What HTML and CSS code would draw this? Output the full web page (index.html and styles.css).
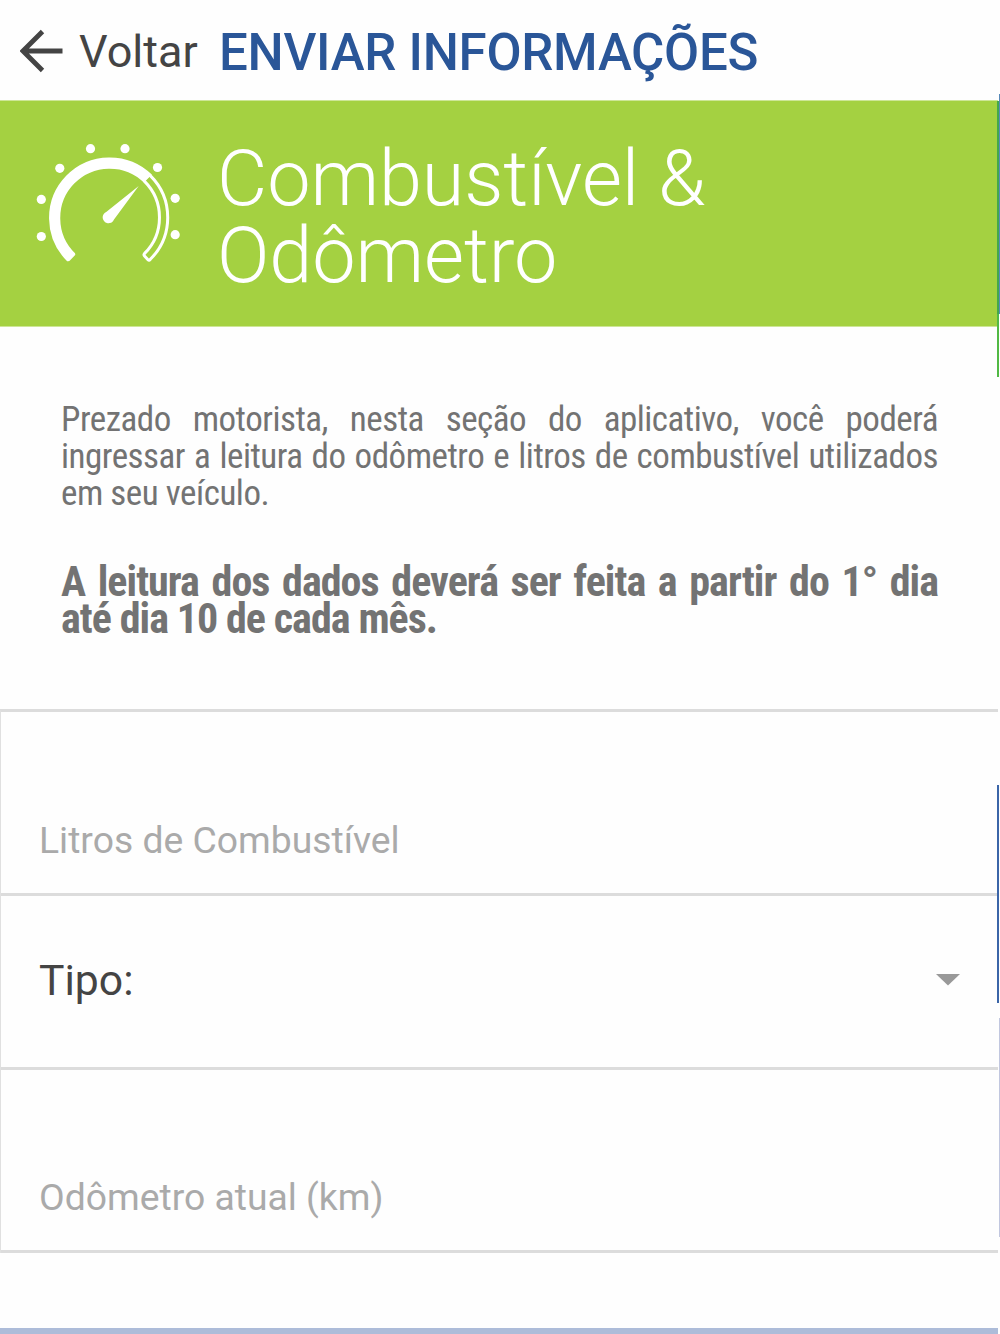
FILE: index.html
```html
<!DOCTYPE html>
<html lang="pt-BR">
<head>
<meta charset="utf-8">
<title>Enviar Informações</title>
<link rel="stylesheet" href="styles.css">
</head>
<body>
<main class="screen">
  <header class="topbar">
    <svg class="back-icon" width="44" height="44" viewBox="0 0 44 44"><path d="M42.500 22H4M22.500 2.500L3 22L22.500 41.500" fill="none" stroke="#444" stroke-width="4.800"/></svg>
    <span class="back">Voltar</span>
    <h1 class="heading">ENVIAR INFORMAÇÕES</h1>
  </header>
  <section class="banner">
    <svg class="gauge" width="150" height="126" viewBox="34 140 150 126">
      <path d="M71.300 257.400A54.800 54.800 0 1 1 147.900 178.600" fill="none" stroke="#fff" stroke-width="11.200"/>
      <path d="M68.600 259.300L73.400 254.300" stroke="#fff" stroke-width="3.600" stroke-linecap="round"/>
      <path d="M150.300 175.600A59 59 0 0 1 150.300 259.300Q149.200 260.900 148 259.700L144.500 256Q143.400 254.800 144.600 253.400A51 51 0 0 0 144.600 181.400Q143.600 180 144.800 178.800L148.200 175.600Q149.300 174.600 150.300 175.600Z" fill="none" stroke="#fff" stroke-width="3"/>
      <path d="M138.700 186L114 219.600A5.900 5.900 0 1 1 106.200 211.900Z" fill="#fff"/>
      <g fill="#fff"><circle cx="41.300" cy="236.500" r="4.600"/><circle cx="41.300" cy="199.400" r="4.600"/><circle cx="59.800" cy="168.300" r="4.600"/><circle cx="90.500" cy="148.700" r="4.600"/><circle cx="125" cy="148.700" r="4.600"/><circle cx="157.500" cy="167.500" r="4.600"/><circle cx="175.200" cy="198.300" r="4.600"/><circle cx="175.200" cy="234.700" r="4.600"/></g>
    </svg>
    <h2 class="title">Combustível &amp;<br>Odômetro</h2>
  </section>
  <section class="intro">
    <p class="lead">Prezado motorista, nesta seção do aplicativo, você poderá ingressar a leitura do odômetro e litros de combustível utilizados em seu veículo.</p>
    <p class="notice">A leitura dos dados deverá ser feita a partir do 1° dia até dia 10 de cada mês.</p>
  </section>
  <form class="form">
    <label class="row liters"><span class="hint">Litros de Combustível</span></label>
    <div class="row kind"><span class="kind-label">Tipo:</span><svg width="24" height="12" viewBox="0 0 24 12"><path d="M0 0H24L12 11.500Z" fill="#999"/></svg></div>
    <label class="row odometer"><span class="hint">Odômetro atual (km)</span></label>
  </form>
  <div class="footer"></div>
  <i class="edge edge-teal"></i><i class="edge edge-sky"></i><i class="edge edge-green"></i><i class="edge edge-blue"></i><i class="edge edge-pale"></i>
</main>
</body>
</html>
```

FILE: styles.css
```css
* { box-sizing: border-box; }
body { margin: 0; background: #fefefe; font-family: Roboto, "Liberation Sans", sans-serif; color: #444; }
h1, h2, p { margin: 0; }
.screen { position: relative; width: 1000px; height: 1334px; overflow: hidden; display: flex; flex-direction: column; }
.topbar { flex: none; height: 100px; display: flex; align-items: flex-start; padding-left: 20px; white-space: nowrap; }
.back-icon { margin-top: 29px; flex: none; }
.back { font-size: 45px; line-height: 60px; margin: 22px 0 0 15px; width: 140px; flex: none; }
.heading { color: #2a5698; font-size: 51px; font-weight: 500; line-height: 60px; letter-spacing: -0.27px; margin-top: 23px; }
.banner { flex: none; height: 227px; width: 998px; background: #a4d141; border-top: 1px solid #cde696; border-bottom: 1px solid #cde696; display: flex; align-items: flex-start; padding: 39px 0 0 34px; }
.gauge { flex: none; }
.title { color: #fff; font-size: 77.400px; line-height: 77px; font-weight: 300; font-stretch: 90%; letter-spacing: -0.1px; margin-left: 33px; white-space: nowrap; }
.intro { flex: none; height: 382px; padding: 74px 62px 0 61px; color: #737373; text-align: justify; }
.lead { font-family: "Roboto Condensed", Roboto, sans-serif; font-stretch: 75%; font-size: 35px; line-height: 37px; letter-spacing: -0.48px; }
.notice { font-family: "Roboto Condensed", Roboto, sans-serif; font-stretch: 75%; font-size: 42px; line-height: 37px; font-weight: 700; letter-spacing: -0.95px; margin: 51px 0 0; }
.form { flex: none; width: 998px; border-left: 1px solid #e0e0e0; border-top: 3px solid #dcdcdc; }
.row { display: flex; border-bottom: 3px solid #dcdcdc; padding: 0 38px; }
.liters { height: 184px; padding-top: 102px; }
.kind { height: 174px; padding-top: 54px; justify-content: space-between; }
.kind svg { margin-top: 24px; }
.odometer { height: 183px; padding-top: 101px; }
.hint { font-size: 37.300px; line-height: 52px; color: #aaa; }
.kind-label { font-size: 42.700px; line-height: 60px; }
.footer { width: 998px; height: 6px; background: #adbcd9; margin-top: auto; }
.edge { position: absolute; }
.edge-teal { left: 997px; top: 101px; width: 3px; height: 213px; background: #45a84b; }
.edge-sky { left: 999px; top: 94px; width: 1px; height: 220px; background: #5689b8; }
.edge-green { left: 997px; top: 314px; width: 2px; height: 63px; background: #51b944; }
.edge-blue { left: 997px; top: 785px; width: 2px; height: 218px; background: #3b65a8; }
.edge-pale { left: 999px; top: 1018px; width: 1px; height: 219px; background: #c1c7df; }
```
